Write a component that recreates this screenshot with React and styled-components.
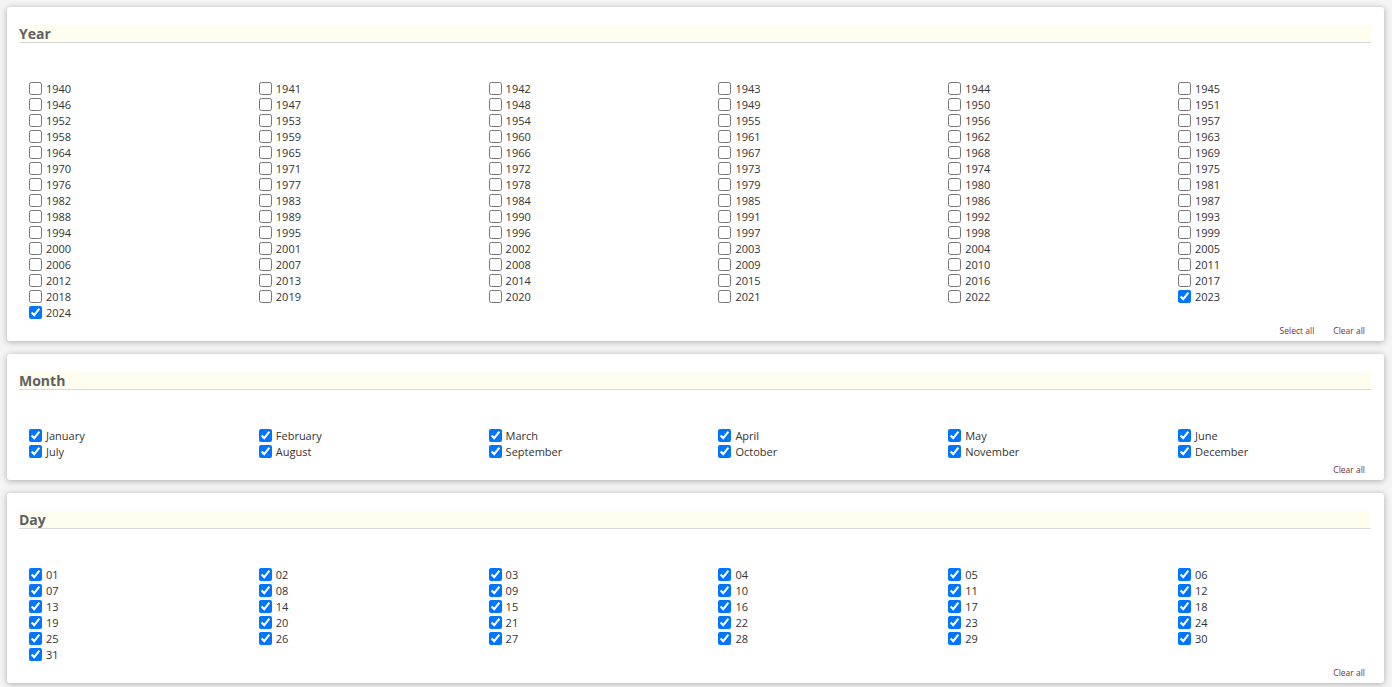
import styled, { createGlobalStyle } from "styled-components";

const years = Array.from({ length: 85 }, (_, i) => String(1940 + i));
const months = [
  "January", "February", "March", "April", "May", "June",
  "July", "August", "September", "October", "November", "December",
];
const days = Array.from({ length: 31 }, (_, i) => String(i + 1).padStart(2, "0"));

const sections = [
  { title: "Year", items: years, checked: (v) => v === "2023" || v === "2024", selectAll: true },
  { title: "Month", items: months, checked: () => true, selectAll: false },
  { title: "Day", items: days, checked: () => true, selectAll: false },
];

const GlobalStyle = createGlobalStyle`
  body {
    margin: 0;
    background: #f4f4f4;
    font-family: "Open Sans", "Liberation Sans", sans-serif;
  }
`;

const Page = styled.div`
  display: flex;
  flex-direction: column;
  gap: 13px;
  padding: 7px 8px 5px 7px;
`;

const Card = styled.section`
  background: #fff;
  border-radius: 3px;
  box-shadow: 0 1px 6px rgba(0, 0, 0, 0.3);
  padding: 18px 13px 4px 12px;
  overflow: hidden;
`;

const Heading = styled.h2`
  margin: 0;
  height: 17px;
  line-height: 17px;
  font-size: 14px;
  font-weight: 700;
  color: #606060;
  background: #fffdf0;
  border-bottom: 1px solid #d8d8d8;
`;

const Grid = styled.div`
  display: grid;
  grid-template-columns: repeat(6, 229.8px);
  grid-auto-rows: 16px;
  margin: 37px 0 0 10px;
`;

const Option = styled.label`
  display: flex;
  align-items: center;
  gap: 4px;
  font-size: 11px;
  color: #333;
  white-space: nowrap;

  input {
    margin: 0;
    width: 13px;
    height: 13px;
    accent-color: #0075ff;
  }
`;

const Actions = styled.div`
  display: flex;
  justify-content: flex-end;
  gap: 19px;
  margin-top: 5px;
  padding-right: 6px;
`;

const ActionLink = styled.a`
  font-size: 8.5px;
  line-height: 12px;
  color: #7a2c40;
  cursor: pointer;
`;

export default function App() {
  return (
    <>
      <GlobalStyle />
      <Page>
        {sections.map((s) => (
          <Card key={s.title}>
            <Heading>{s.title}</Heading>
            <Grid>
              {s.items.map((v) => (
                <Option key={v}>
                  <input type="checkbox" defaultChecked={s.checked(v)} />
                  {v}
                </Option>
              ))}
            </Grid>
            <Actions>
              {s.selectAll && <ActionLink>Select all</ActionLink>}
              <ActionLink>Clear all</ActionLink>
            </Actions>
          </Card>
        ))}
      </Page>
    </>
  );
}
